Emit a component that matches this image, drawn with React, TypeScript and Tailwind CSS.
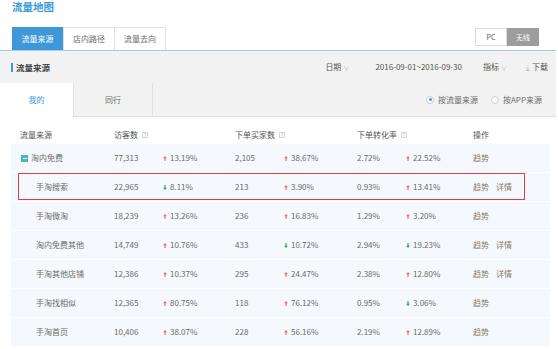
import React from 'react'

type Row = {
  name: string
  visitors: string
  vChange: string
  vUp: boolean
  buyers: string
  bChange: string
  bUp: boolean
  conv: string
  cChange: string
  cUp: boolean
  detail?: boolean
  group?: boolean
  marked?: boolean
}

const rows: Row[] = [
  { name: '淘内免费', visitors: '77,313', vChange: '13.19%', vUp: true, buyers: '2,105', bChange: '38.67%', bUp: true, conv: '2.72%', cChange: '22.52%', cUp: true, group: true },
  { name: '手淘搜索', visitors: '22,965', vChange: '8.11%', vUp: false, buyers: '213', bChange: '3.90%', bUp: true, conv: '0.93%', cChange: '13.41%', cUp: true, detail: true, marked: true },
  { name: '手淘微淘', visitors: '18,239', vChange: '13.26%', vUp: true, buyers: '236', bChange: '16.83%', bUp: true, conv: '1.29%', cChange: '3.20%', cUp: true },
  { name: '淘内免费其他', visitors: '14,749', vChange: '10.76%', vUp: true, buyers: '433', bChange: '10.72%', bUp: false, conv: '2.94%', cChange: '19.23%', cUp: false, detail: true },
  { name: '手淘其他店铺', visitors: '12,386', vChange: '10.37%', vUp: true, buyers: '295', bChange: '24.47%', bUp: true, conv: '2.38%', cChange: '12.80%', cUp: true, detail: true },
  { name: '手淘找相似', visitors: '12,365', vChange: '80.75%', vUp: true, buyers: '118', bChange: '76.12%', bUp: true, conv: '0.95%', cChange: '3.06%', cUp: false },
  { name: '手淘首页', visitors: '10,406', vChange: '38.07%', vUp: true, buyers: '228', bChange: '56.16%', bUp: true, conv: '2.19%', cChange: '12.89%', cUp: true },
]

function Arrow({ up }: { up: boolean }) {
  const color = up ? '#f06a7c' : '#45a552'
  return (
    <svg width="4" height="5" viewBox="0 0 4 5" className="mr-[3px] shrink-0">
      {up ? (
        <path d="M2 0 L4 2.2 L2.6 2.2 L2.6 5 L1.4 5 L1.4 2.2 L0 2.2 Z" fill={color} />
      ) : (
        <path d="M2 5 L4 2.8 L2.6 2.8 L2.6 0 L1.4 0 L1.4 2.8 L0 2.8 Z" fill={color} />
      )}
    </svg>
  )
}

function Change({ value, up }: { value: string; up: boolean }) {
  return (
    <div className="flex items-center">
      <Arrow up={up} />
      <span>{value}</span>
    </div>
  )
}

function Help() {
  return (
    <span className="ml-[4px] inline-flex h-[6px] w-[6px] items-center justify-center border border-[#d6d6d6] text-[5px] leading-none text-[#bbb]">
      ?
    </span>
  )
}

const cols = 'grid grid-cols-[103px_49px_72px_49px_73px_49px_67px_1fr] items-center'

export default function App() {
  return (
    <div
      className="h-[349px] w-[558px] overflow-hidden bg-white text-[8px] text-[#6b6b6b]"
      style={{ fontFamily: '"Noto Sans CJK SC", "Noto Sans", sans-serif' }}
    >
      {/* title */}
      <div className="h-[27px] pl-[12px] text-[10.5px] font-bold leading-[14px] text-[#3b9ad8]">流量地图</div>

      {/* top tabs */}
      <div className="flex h-[23px] items-start justify-between pl-[12px] pr-[19px]">
        <div className="flex h-[23px]">
          <div className="flex w-[51px] items-center justify-center bg-[#3d97d8] text-white">流量来源</div>
          <div className="flex w-[52px] items-center justify-center border border-b-0 border-[#e3e3e3]">店内路径</div>
          <div className="flex w-[51px] items-center justify-center border border-b-0 border-l-0 border-[#e3e3e3]">流量去向</div>
        </div>
        <div className="mt-[1px] flex h-[18px] text-[7px]">
          <div className="flex w-[32px] items-center justify-center border border-[#ddd] bg-white text-[#555]">PC</div>
          <div className="flex w-[32px] items-center justify-center bg-[#9d9d9d] text-white">无线</div>
        </div>
      </div>

      {/* panel */}
      <div className="w-[556px] border-t border-[#a6cdea]">
        <div className="flex h-[32px] items-center bg-[#f2f2f2] pl-[11px] pr-[8px]">
          <div className="mr-[3px] h-[9px] w-[2px] bg-[#3d97d8]" />
          <div className="text-[8.5px] font-bold text-[#444]">流量来源</div>
          <div className="ml-auto flex items-center text-[#555]">
            <span>日期</span>
            <span className="ml-[2px] text-[6px] text-[#bbb]">∨</span>
            <span className="ml-[26px]">2016-09-01~2016-09-30</span>
            <span className="ml-[21px]">指标</span>
            <span className="ml-[2px] text-[6px] text-[#bbb]">∨</span>
            <span className="ml-[19px] text-[#bbb]">⤓</span>
            <span className="ml-[2px]">下载</span>
          </div>
        </div>

        <div className="flex h-[34px] bg-[#f2f2f2]">
          <div className="flex w-[73px] items-center justify-center bg-white text-[#3d97d8]">我的</div>
          <div className="flex w-[80px] items-center justify-center border-x border-b border-[#e0e0e0] bg-[#f2f2f2]">同行</div>
          <div className="flex flex-1 items-center justify-end border-b border-[#e0e0e0] pr-[14px]">
            <span className="flex h-[8px] w-[8px] items-center justify-center rounded-full border border-[#ccc] bg-white">
              <span className="h-[3px] w-[3px] rounded-full bg-[#3d97d8]" />
            </span>
            <span className="ml-[4px]">按流量来源</span>
            <span className="ml-[13px] h-[8px] w-[8px] rounded-full border border-[#ccc] bg-white" />
            <span className="ml-[4px]">按APP来源</span>
          </div>
        </div>
      </div>

      {/* table */}
      <div className="ml-[11px] mt-[9px] w-[539px]">
        <div className={`${cols} h-[17px] text-[#555]`}>
          <div className="pl-[9px]">流量来源</div>
          <div className="col-span-2 flex items-center">
            访客数
            <Help />
          </div>
          <div className="col-span-2 flex items-center">
            下单买家数
            <Help />
          </div>
          <div className="col-span-2 flex items-center">
            下单转化率
            <Help />
          </div>
          <div>操作</div>
        </div>

        {rows.map((r) => (
          <div key={r.name} className={`${cols} relative h-[29px] border-t border-white bg-[#f5f8fc]`}>
            {r.group ? (
              <div className="flex items-center pl-[10px]">
                <span className="mr-[3px] flex h-[7px] w-[7px] items-center justify-center bg-[#47b5c6]">
                  <span className="h-[1px] w-[4px] bg-white" />
                </span>
                {r.name}
              </div>
            ) : (
              <div className="pl-[25px]">{r.name}</div>
            )}
            <div>{r.visitors}</div>
            <Change value={r.vChange} up={r.vUp} />
            <div>{r.buyers}</div>
            <Change value={r.bChange} up={r.bUp} />
            <div>{r.conv}</div>
            <Change value={r.cChange} up={r.cUp} />
            <div className="flex gap-[7px] text-[#8a7a68]">
              <span>趋势</span>
              {r.detail && <span>详情</span>}
            </div>
            {r.marked && (
              <div className="absolute left-[7px] top-[0px] h-[27px] w-[507px] border-[1.5px] border-[#e23a40]" />
            )}
          </div>
        ))}
      </div>
    </div>
  )
}
